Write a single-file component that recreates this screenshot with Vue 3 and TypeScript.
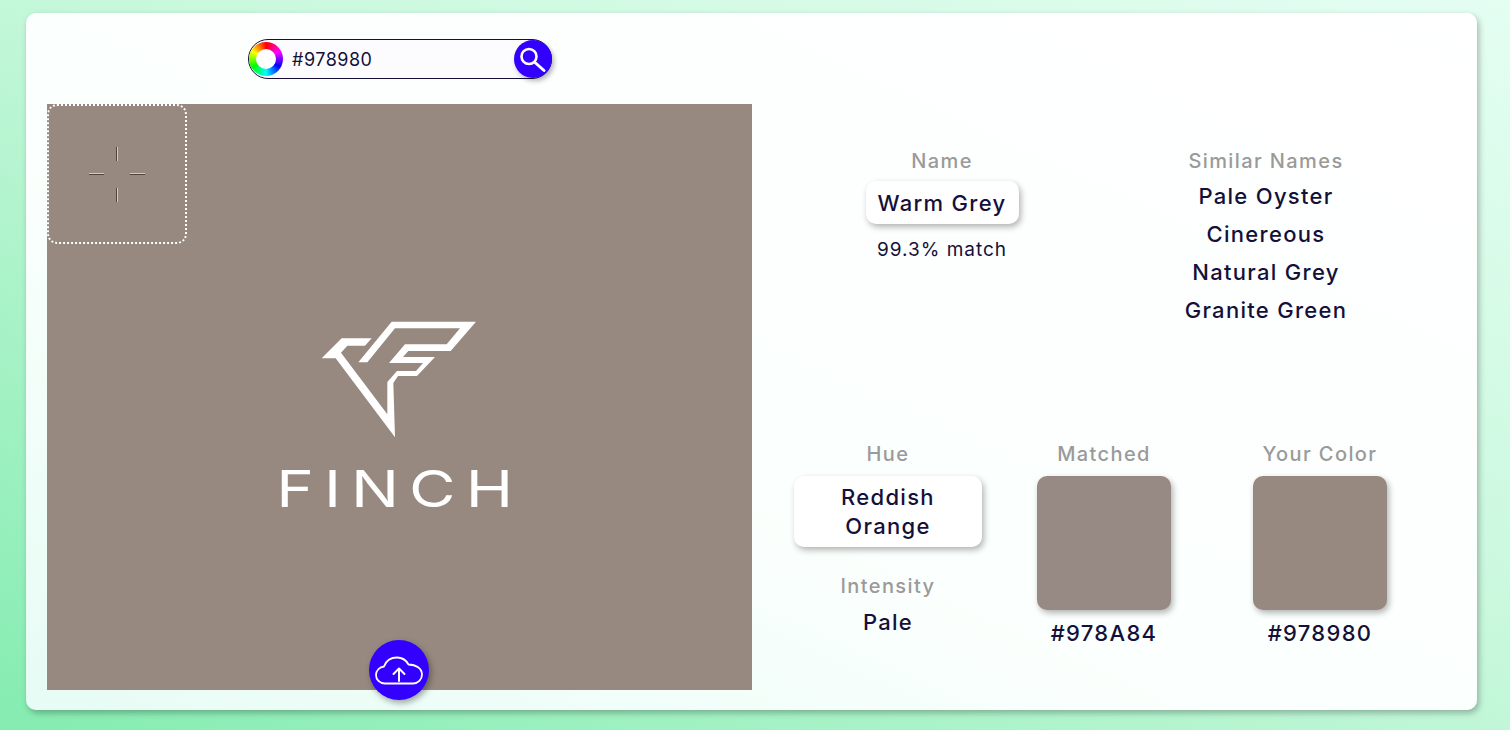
<script setup lang="ts">
import { ref } from 'vue';

const hex = ref('#978980');
const similar = ['Pale Oyster', 'Cinereous', 'Natural Grey', 'Granite Green'];
</script>

<template>
  <div class="page">
    <div class="card">
      <section class="left">
        <div class="search-row">
          <div class="search">
            <span class="wheel"><span class="wheel-hole" /></span>
            <input v-model="hex" class="hex-input" />
            <button class="search-btn">
              <svg width="38" height="38" viewBox="0 0 38 38" fill="none" stroke="#fff" stroke-linecap="round">
                <circle cx="15" cy="16.5" r="7.5" stroke-width="2.6" />
                <line x1="21" y1="22.5" x2="30" y2="30.5" stroke-width="3" />
              </svg>
            </button>
          </div>
        </div>
        <div class="canvas">
          <div class="picker">
            <span class="tick tick-v" />
            <span class="tick-row"><span class="tick tick-h" /><span class="tick tick-h" /></span>
            <span class="tick tick-v" />
          </div>
          <div class="logo">
            <svg class="logo-mark" width="250" height="142" viewBox="0 0 750 426">
              <path
                fill="#fff"
                d="M265 157L365 35H618L542 123H415L399 141H495L441 198H384L370 219L375 382L197 145H155L215 85H305L285 107H232L213 128L352 313V216L381 183H438L459 159H357L405 103H530L570 55H375L292 157Z"
              />
            </svg>
            <span class="wordmark">FINCH</span>
          </div>
          <button class="upload-btn">
            <svg width="60" height="60" viewBox="0 0 60 60" fill="none" stroke="#fff" stroke-width="1.8" stroke-linecap="round" stroke-linejoin="round">
              <path d="M16 43.5C10.5 43.5 7 39.5 7 35C7 30.5 10.5 27 15 26.5C17 21 22 17.5 28 17.5C33 17.5 37 20 39.5 24.5C47 24.5 53 28.5 53 34.5C53 39.5 49 43.5 44 43.5Z" />
              <path d="M30 41V28.5M24.5 34L30 28.5L35.5 34" stroke-width="2" />
            </svg>
          </button>
        </div>
      </section>

      <section class="right">
        <div class="top-row">
          <div class="block name-block">
            <div class="label">Name</div>
            <div class="pill name-pill">Warm Grey</div>
            <div class="match">99.3% match</div>
          </div>
          <div class="block similar-block">
            <div class="label">Similar Names</div>
            <div class="similar-list">
              <div v-for="item in similar" :key="item" class="value similar-item">{{ item }}</div>
            </div>
          </div>
        </div>
        <div class="bottom-row">
          <div class="block hue-block">
            <div class="label">Hue</div>
            <div class="pill hue-pill">Reddish<br />Orange</div>
            <div class="label intensity">Intensity</div>
            <div class="value pale">Pale</div>
          </div>
          <div class="block swatch-block first-swatch">
            <div class="label">Matched</div>
            <div class="swatch matched" />
            <div class="value hex">#978A84</div>
          </div>
          <div class="block swatch-block">
            <div class="label">Your Color</div>
            <div class="swatch yours" />
            <div class="value hex">#978980</div>
          </div>
        </div>
      </section>
    </div>
  </div>
</template>

<style>
html,
body {
  margin: 0;
  height: 100%;
  overflow: hidden;
}
</style>

<style scoped>
.page {
  box-sizing: border-box;
  width: 1510px;
  height: 730px;
  padding: 13px 33px 20px 26px;
  background: linear-gradient(25deg, #84ecb0 0%, #c8f8dc 55%, #e4fef2 100%);
  font-family: "Inter", "Open Sans", sans-serif;
  color: #14103a;
}

.card {
  display: flex;
  height: 100%;
  padding: 26px 0 20px 21px;
  box-sizing: border-box;
  background: linear-gradient(25deg, #e6fcf4 0%, #fbfffd 40%, #fff 100%);
  border-radius: 10px;
  box-shadow: 2px 3px 6px rgba(0, 0, 0, 0.28);
}

.left {
  display: flex;
  flex-direction: column;
  width: 705px;
  flex-shrink: 0;
}

.search-row {
  display: flex;
  height: 65px;
  padding-left: 201px;
}

.search {
  display: flex;
  align-items: center;
  box-sizing: border-box;
  width: 304px;
  height: 40px;
  border: 1px solid #14103a;
  border-radius: 20px;
  background: #fcfcff;
}

.wheel {
  display: flex;
  align-items: center;
  justify-content: center;
  width: 34px;
  height: 34px;
  flex-shrink: 0;
  border-radius: 50%;
  background: conic-gradient(#ff0000, #ff00ff, #0000ff, #00ffff, #00ff00, #ffff00, #ff0000);
}

.wheel-hole {
  width: 20px;
  height: 20px;
  border-radius: 50%;
  background: #fff;
}

.hex-input {
  flex: 1;
  min-width: 0;
  padding: 0 0 0 9px;
  border: none;
  outline: none;
  background: transparent;
  font-family: inherit;
  font-size: 18px;
  color: #14103a;
  letter-spacing: 0.5px;
}

.search-btn {
  display: flex;
  align-items: center;
  justify-content: center;
  flex-shrink: 0;
  width: 38px;
  height: 38px;
  margin-right: -1px;
  padding: 0;
  border: none;
  border-radius: 50%;
  background: #3300ff;
  box-shadow: 2px 3px 5px rgba(0, 0, 0, 0.3);
}

.canvas {
  position: relative;
  display: flex;
  align-items: center;
  justify-content: center;
  height: 586px;
  background: #978980;
}

.picker {
  position: absolute;
  left: 0;
  top: 0;
  box-sizing: border-box;
  display: flex;
  flex-direction: column;
  align-items: center;
  justify-content: center;
  gap: 13px;
  width: 140px;
  height: 140px;
  border: 2px dotted #fff;
  border-radius: 10px;
}

.tick-row {
  display: flex;
  gap: 26px;
}

.tick {
  display: block;
  background: #4f443d;
}

.tick-v {
  width: 1px;
  height: 14px;
  margin-left: -1px;
  box-shadow: 1px 0 0 #d2ccc7;
}

.tick-h {
  width: 15px;
  height: 1px;
  box-shadow: 0 -1px 0 #d2ccc7;
}

.logo {
  display: flex;
  flex-direction: column;
  align-items: center;
  margin: 32px 0 0 -6px;
}

.logo-mark {
  margin-right: 3px;
}

.wordmark {
  margin-top: 9px;
  margin-right: -6px;
  font-family: "Inter", sans-serif;
  font-weight: 400;
  font-size: 51px;
  line-height: 56px;
  letter-spacing: 8px;
  color: #fff;
  transform: scaleX(1.25);
}

.upload-btn {
  position: absolute;
  left: 322px;
  top: 536px;
  display: flex;
  align-items: center;
  justify-content: center;
  width: 60px;
  height: 60px;
  padding: 0;
  border: none;
  border-radius: 50%;
  background: #3300ff;
  box-shadow: 2px 3px 6px rgba(0, 0, 0, 0.35);
}

.right {
  flex: 1;
  display: flex;
  flex-direction: column;
  min-width: 0;
}

.top-row {
  display: flex;
  height: 403px;
  padding: 110px 0 0 90px;
  box-sizing: border-box;
}

.block {
  display: flex;
  flex-direction: column;
  align-items: center;
}

.name-block {
  width: 200px;
}

.similar-block {
  width: 240px;
  margin-left: 104px;
}

.label {
  font-size: 20px;
  font-weight: 500;
  line-height: 24px;
  letter-spacing: 1.4px;
  color: #9a9a9a;
  white-space: nowrap;
}

.value {
  font-size: 22px;
  font-weight: 500;
  letter-spacing: 1.3px;
  white-space: nowrap;
}

.pill {
  box-sizing: border-box;
  background: #fff;
  border-radius: 10px;
  box-shadow: 2px 3px 6px rgba(0, 0, 0, 0.3);
  font-size: 22px;
  font-weight: 500;
  letter-spacing: 1.3px;
  text-align: center;
}

.name-pill {
  width: 153px;
  height: 43px;
  margin-top: 8px;
  line-height: 44px;
}

.match {
  margin-top: 14px;
  font-size: 19px;
  line-height: 24px;
  letter-spacing: 1px;
}

.similar-list {
  margin-top: 4px;
}

.similar-item {
  line-height: 38px;
  text-align: center;
}

.bottom-row {
  display: flex;
  padding-left: 42px;
}

.hue-block {
  width: 188px;
}

.hue-pill {
  width: 188px;
  height: 71px;
  margin-top: 10px;
  padding-top: 7px;
  line-height: 29px;
}

.intensity {
  margin-top: 27px;
}

.pale {
  margin-top: 11px;
  line-height: 26px;
}

.swatch-block {
  width: 216px;
}

.first-swatch {
  margin-left: 14px;
}

.swatch {
  width: 134px;
  height: 134px;
  margin-top: 10px;
  border-radius: 10px;
  box-shadow: 2px 3px 6px rgba(0, 0, 0, 0.3);
}

.matched {
  background: #978a84;
}

.yours {
  background: #978980;
}

.hex {
  margin-top: 10px;
  line-height: 26px;
}
</style>
